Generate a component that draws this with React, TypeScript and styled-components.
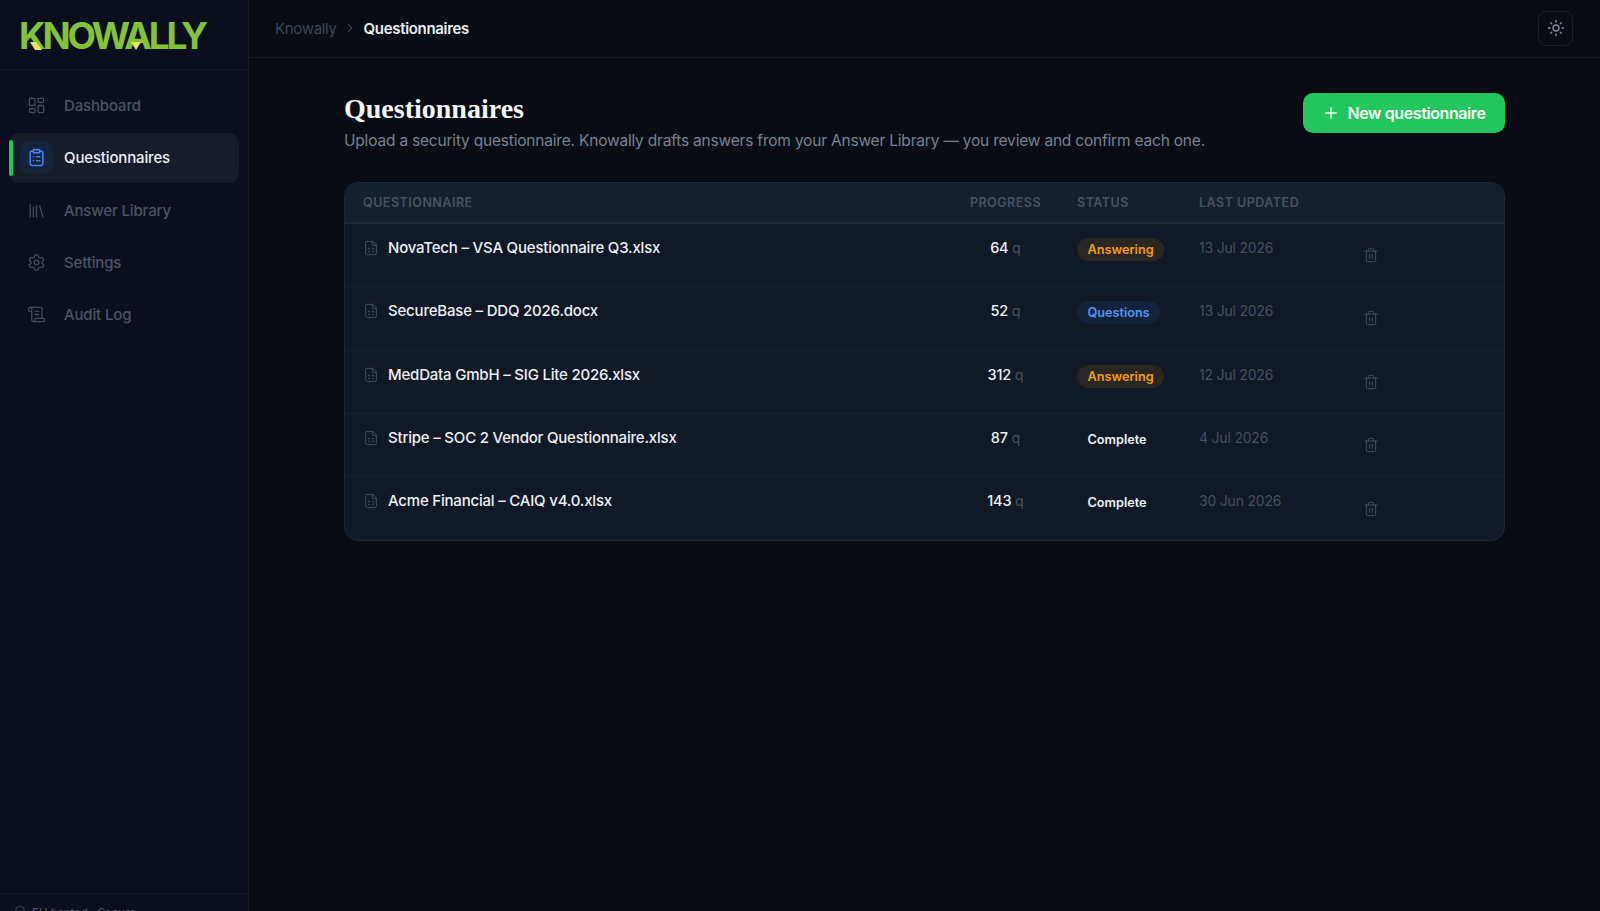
import styled, { createGlobalStyle } from "styled-components"
import {
    ChevronRight,
    ClipboardList,
    FileSpreadsheet,
    LayoutDashboard,
    Library,
    Plus,
    ScrollText,
    Settings,
    Shield,
    Sun,
    Trash2,
} from "lucide-react"

const GlobalStyle = createGlobalStyle`
    html, body {
        margin: 0;
        height: 100%;
        background: #090c13;
        font-family: "Inter", "Noto Sans", sans-serif;
        overflow: hidden;
    }
    * { box-sizing: border-box; }
`

const Shell = styled.div`
    display: flex;
    height: 911px;
    overflow: hidden;
    background: #090c13;
`

const Sidebar = styled.aside`
    flex: 0 0 249px;
    height: 935px;
    display: flex;
    flex-direction: column;
    background: #0b0f1d;
    border-right: 1px solid #151a26;
`

const LogoBar = styled.div`
    height: 70px;
    flex-shrink: 0;
    padding: 13px 0 0 19px;
    border-bottom: 1px solid #151a26;
`

const Logo = styled.div`
    position: relative;
    display: inline-block;
    font-size: 37px;
    line-height: 45px;
    font-weight: 700;
    letter-spacing: -3.2px;
    color: #83c336;
`

const LogoMark = styled.svg<{ $left: number }>`
    position: absolute;
    left: ${({ $left }) => $left}px;
    top: 29px;
    width: 12px;
    height: 8px;
`

const Nav = styled.nav`
    flex: 1;
    display: flex;
    flex-direction: column;
    gap: 2px;
    padding: 10.5px 9px 0 9px;
`

const NavItem = styled.div<{ $active?: boolean }>`
    position: relative;
    height: 50.3px;
    display: flex;
    align-items: center;
    gap: 11px;
    padding-left: 11px;
    border-radius: 10px;
    font-size: 15px;
    font-weight: 500;
    letter-spacing: -0.15px;
    color: ${({ $active }) => ($active ? "#eef1f6" : "#4b5363")};
    background: ${({ $active }) => ($active ? "#161c2a" : "transparent")};
`

const ActiveBar = styled.span`
    position: absolute;
    left: 0;
    top: 7px;
    bottom: 7px;
    width: 4px;
    border-radius: 3px;
    background: #22c55e;
`

const NavIcon = styled.span<{ $active?: boolean }>`
    width: 33px;
    height: 33px;
    display: flex;
    align-items: center;
    justify-content: center;
    border-radius: 9px;
    color: ${({ $active }) => ($active ? "#3b82f6" : "#454c5b")};
    background: ${({ $active }) => ($active ? "#17233b" : "transparent")};
`

const SidebarFooter = styled.div`
    height: 42px;
    flex-shrink: 0;
    display: flex;
    align-items: flex-start;
    gap: 6px;
    padding: 11px 0 0 14px;
    border-top: 1px solid #151a26;
    font-size: 11.5px;
    line-height: 16px;
    color: #4b5363;
`

const Main = styled.main`
    flex: 1;
    min-width: 0;
    display: flex;
    flex-direction: column;
`

const TopBar = styled.header`
    height: 58px;
    flex-shrink: 0;
    display: flex;
    align-items: center;
    justify-content: space-between;
    padding: 0 27px 1px 26px;
    border-bottom: 1px solid #161a22;
`

const Breadcrumb = styled.div`
    display: flex;
    align-items: center;
    gap: 6.5px;
    font-size: 15px;
    letter-spacing: -0.32px;
    color: #3f4653;
    svg { color: #4b5363; }
`

const Crumb = styled.span`
    color: #eceff4;
    font-weight: 600;
`

const ThemeButton = styled.button`
    width: 35px;
    height: 35px;
    display: flex;
    align-items: center;
    justify-content: center;
    padding: 0;
    background: transparent;
    border: 1px solid #1a1f2a;
    border-radius: 8px;
    color: #8b93a3;
`

const Content = styled.div`
    padding: 35px 95px 0 95px;
`

const PageHeader = styled.div`
    display: flex;
    justify-content: space-between;
    align-items: flex-start;
    margin-bottom: 29px;
`

const Title = styled.h1`
    margin: 0;
    font-family: "Liberation Serif", serif;
    font-size: 28px;
    line-height: 32px;
    font-weight: 700;
    color: #f5f7fa;
`

const Subtitle = styled.p`
    margin: 4px 0 0 0;
    font-size: 15.5px;
    line-height: 24px;
    letter-spacing: -0.2px;
    color: #788292;
`

const NewButton = styled.button`
    width: 202px;
    height: 40px;
    display: flex;
    align-items: center;
    justify-content: center;
    gap: 7px;
    border: 0;
    border-radius: 10px;
    background: #22c55e;
    color: #f7fff9;
    font-family: inherit;
    font-size: 16px;
    font-weight: 600;
    letter-spacing: -0.4px;
`

const Card = styled.section`
    border: 1px solid #1d2735;
    border-radius: 14px;
    overflow: hidden;
    background: #111826;
`

const Row = styled.div<{ $head?: boolean }>`
    display: grid;
    grid-template-columns: 607px 107px 122px 163px 1fr;
    height: ${({ $head }) => ($head ? "41px" : "63.3px")};
    align-items: ${({ $head }) => ($head ? "center" : "start")};
    background: ${({ $head }) => ($head ? "#151f2d" : "transparent")};
    border-bottom: ${({ $head }) => ($head ? "2px solid #1e2937" : "1px solid #182130")};
    &:last-child { border-bottom: 0; }
`

const HeadCell = styled.div<{ $center?: boolean }>`
    padding-left: ${({ $center }) => ($center ? "0" : "18px")};
    text-align: ${({ $center }) => ($center ? "center" : "left")};
    font-size: 12.5px;
    font-weight: 600;
    letter-spacing: 0.5px;
    color: #485261;
`

const NameCell = styled.div`
    display: flex;
    align-items: center;
    gap: 9px;
    padding: 14px 0 0 18px;
    font-size: 15px;
    line-height: 20px;
    font-weight: 500;
    letter-spacing: -0.2px;
    color: #eef1f5;
    svg { color: #465061; flex-shrink: 0; }
`

const CountCell = styled.div`
    padding-top: 14px;
    text-align: center;
    font-size: 14.5px;
    line-height: 20px;
    font-weight: 500;
    letter-spacing: -0.2px;
    color: #eef1f5;
`

const Unit = styled.span`
    color: #465061;
    font-weight: 400;
`

const StatusCell = styled.div`
    padding: 14px 0 0 18px;
`

const Pill = styled.span<{ $fg: string; $bg: string }>`
    display: inline-block;
    height: 23px;
    padding: 0 10.5px;
    border-radius: 12px;
    font-size: 12.7px;
    line-height: 23px;
    font-weight: 600;
    color: ${({ $fg }) => $fg};
    background: ${({ $bg }) => $bg};
`

const DateCell = styled.div`
    padding: 14px 0 0 18px;
    font-size: 14px;
    line-height: 20px;
    letter-spacing: -0.2px;
    color: #465061;
`

const ActionCell = styled.div`
    align-self: center;
    display: flex;
    padding-left: 19px;
    color: #465061;
`

const navItems = [
    { label: "Dashboard", Icon: LayoutDashboard },
    { label: "Questionnaires", Icon: ClipboardList, active: true },
    { label: "Answer Library", Icon: Library },
    { label: "Settings", Icon: Settings },
    { label: "Audit Log", Icon: ScrollText },
]

const statusColors = {
    Answering: { fg: "#f59e0b", bg: "#2a2622" },
    Questions: { fg: "#4f96f7", bg: "#14233c" },
    Complete: { fg: "#eef1f5", bg: "transparent" },
}

const rows: { name: string; count: number; status: keyof typeof statusColors; updated: string }[] = [
    { name: "NovaTech – VSA Questionnaire Q3.xlsx", count: 64, status: "Answering", updated: "13 Jul 2026" },
    { name: "SecureBase – DDQ 2026.docx", count: 52, status: "Questions", updated: "13 Jul 2026" },
    { name: "MedData GmbH – SIG Lite 2026.xlsx", count: 312, status: "Answering", updated: "12 Jul 2026" },
    { name: "Stripe – SOC 2 Vendor Questionnaire.xlsx", count: 87, status: "Complete", updated: "4 Jul 2026" },
    { name: "Acme Financial – CAIQ v4.0.xlsx", count: 143, status: "Complete", updated: "30 Jun 2026" },
]

export default function App() {
    return (
        <Shell>
            <GlobalStyle />
            <Sidebar>
                <LogoBar>
                    <Logo>
                        KNOWALLY
                        <LogoMark $left={11} viewBox="0 0 12 8">
                            <polygon points="0,0 6,0 12,8 5,8" fill="#e8e46a" />
                        </LogoMark>
                        <LogoMark $left={111} viewBox="0 0 12 8">
                            <polygon points="1,0 11,0 6,8" fill="#e8e46a" />
                        </LogoMark>
                    </Logo>
                </LogoBar>
                <Nav>
                    {navItems.map(({ label, Icon, active }) => (
                        <NavItem key={label} $active={active}>
                            {active && <ActiveBar />}
                            <NavIcon $active={active}>
                                <Icon size={19} strokeWidth={active ? 2 : 1.6} />
                            </NavIcon>
                            {label}
                        </NavItem>
                    ))}
                </Nav>
                <SidebarFooter>
                    <Shield size={12} strokeWidth={1.75} />
                    EU hosted · Secure
                </SidebarFooter>
            </Sidebar>
            <Main>
                <TopBar>
                    <Breadcrumb>
                        Knowally
                        <ChevronRight size={14} strokeWidth={1.75} />
                        <Crumb>Questionnaires</Crumb>
                    </Breadcrumb>
                    <ThemeButton>
                        <Sun size={18} strokeWidth={1.75} />
                    </ThemeButton>
                </TopBar>
                <Content>
                    <PageHeader>
                        <div>
                            <Title>Questionnaires</Title>
                            <Subtitle>
                                Upload a security questionnaire. Knowally drafts answers from your Answer Library — you review and confirm each one.
                            </Subtitle>
                        </div>
                        <NewButton>
                            <Plus size={18} strokeWidth={2} />
                            New questionnaire
                        </NewButton>
                    </PageHeader>
                    <Card>
                        <Row $head>
                            <HeadCell>QUESTIONNAIRE</HeadCell>
                            <HeadCell $center>PROGRESS</HeadCell>
                            <HeadCell>STATUS</HeadCell>
                            <HeadCell>LAST UPDATED</HeadCell>
                            <HeadCell />
                        </Row>
                        {rows.map(row => (
                            <Row key={row.name}>
                                <NameCell>
                                    <FileSpreadsheet size={16} strokeWidth={1.5} />
                                    {row.name}
                                </NameCell>
                                <CountCell>
                                    {row.count} <Unit>q</Unit>
                                </CountCell>
                                <StatusCell>
                                    <Pill $fg={statusColors[row.status].fg} $bg={statusColors[row.status].bg}>
                                        {row.status}
                                    </Pill>
                                </StatusCell>
                                <DateCell>{row.updated}</DateCell>
                                <ActionCell>
                                    <Trash2 size={16} strokeWidth={1.5} />
                                </ActionCell>
                            </Row>
                        ))}
                    </Card>
                </Content>
            </Main>
        </Shell>
    )
}
